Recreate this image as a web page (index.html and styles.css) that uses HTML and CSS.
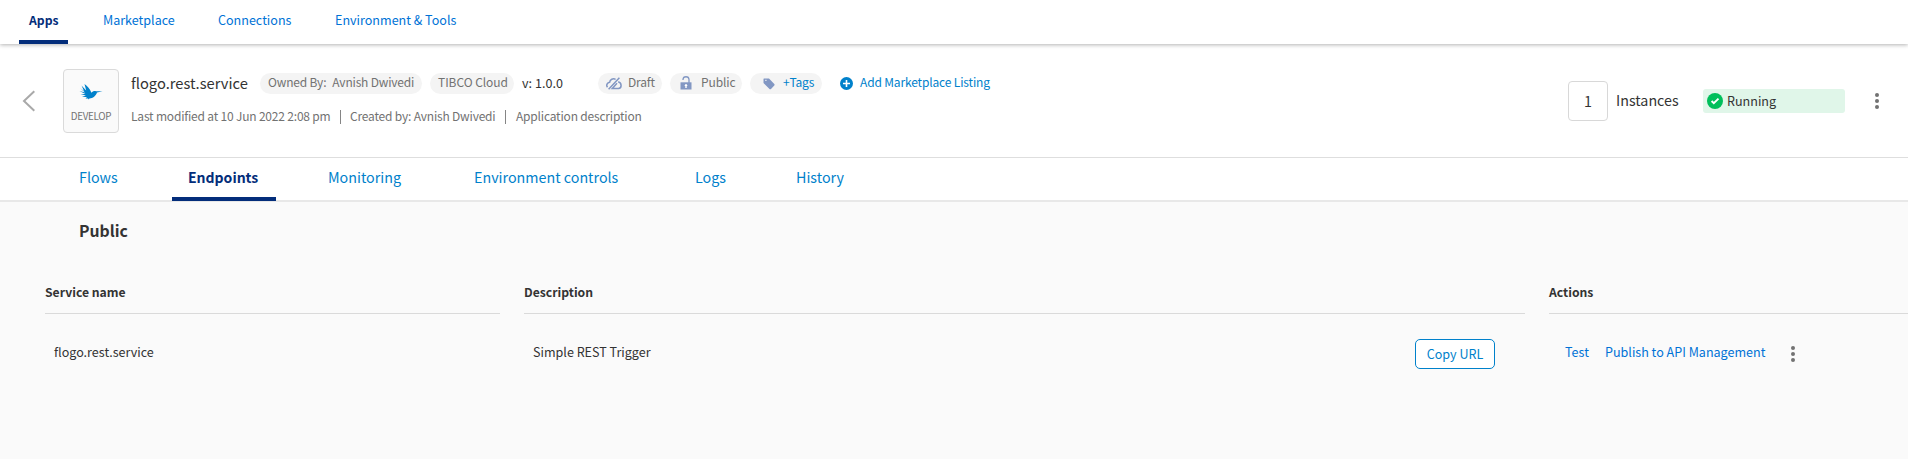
FILE: index.html
```html
<!DOCTYPE html>
<html lang="en">
<head>
<meta charset="utf-8">
<title>flogo.rest.service</title>
<link rel="stylesheet" href="styles.css">
</head>
<body>
<nav class="topnav">
  <a class="nav-item nav-apps">Apps</a>
  <a class="nav-item nav-market">Marketplace</a>
  <a class="nav-item nav-conn">Connections</a>
  <a class="nav-item nav-env">Environment &amp; Tools</a>
</nav>
<header class="app-header">
  <svg class="back" width="14" height="22" viewBox="0 0 14 22"><path d="M12.300 1.300 2 11l10.300 9.700" fill="none" stroke="#a9a9a9" stroke-width="2"/></svg>
  <div class="app-tile">
    <svg width="24" height="16" viewBox="0 0 24 16"><path fill="#0081cb" d="M1 4 5 7 2.500 1.500 7.200 6.500 5.500 0C8.500 2 11 5 12.400 8.800 13.500 7.500 15 6.900 17 7.200L23.500 7.300 18 8.600C17 12 13.800 14.500 10.500 14.600L9 15.500 9.200 14.500 6.500 14.500 8 13.200 3 12.500 7 11.500 1.500 10 6.500 10 .5 7 6 8.600Z"/></svg>
    <span class="tile-label">DEVELOP</span>
  </div>
  <div class="app-info">
    <div class="title-row">
      <h1 class="app-name">flogo.rest.service</h1>
      <span class="pill pill-owner"><span>Owned By:</span><span>Avnish Dwivedi</span></span>
      <span class="pill pill-cloud">TIBCO Cloud</span>
      <span class="version">v: 1.0.0</span>
      <span class="pill pill-draft"><svg width="16" height="13" viewBox="0 0 16 13"><path d="M2.600 12.300 13.400.7M1.500 10.300C-.2 8.200 1.300 5.600 3.600 5.300 4 2.500 7 1 9.600 2.300M12.200 4.800C16 6 16 11.200 12.500 11.400H6.300L11 6.300" fill="none" stroke="#8297c3" stroke-width="1.500"/></svg>Draft</span>
      <span class="pill pill-public"><svg width="12" height="14" viewBox="0 0 12 14"><path d="M3 4V3.500C3.200-.2 8.800-.2 9 3.500V7" fill="none" stroke="#8297c3" stroke-width="1.300"/><path fill="#8297c3" d="M.5 6.300h11v7.200H.5z"/><path fill="#fff" d="M5.300 8h1.400v1h.6v1h-.6v2H5.300v-2h-.6V9h.6z"/></svg>Public</span>
      <span class="pill pill-tags"><svg width="12" height="12" viewBox="0 0 12 12"><path fill="#8297c3" fill-rule="evenodd" d="M1 .5h5L11.300 6q.7.800 0 1.500L8 11q-.8.700-1.500 0L.5 5V1Q.5.500 1 .5Zm1.300 1.200v1.200h1.200V1.700Z"/></svg>+Tags</span>
      <a class="add-listing"><svg width="13" height="13" viewBox="0 0 13 13"><circle cx="6.500" cy="6.500" r="6.500" fill="#0081cb"/><path d="M6.500 3v7M3 6.500h7" stroke="#fff" stroke-width="1.600"/></svg><span>Add Marketplace Listing</span></a>
    </div>
    <div class="meta-row">
      <span class="modified">Last modified at 10 Jun 2022 2:08 pm</span><i class="bar"></i>
      <span class="created">Created by: Avnish Dwivedi</span><i class="bar"></i>
      <span class="desc">Application description</span>
    </div>
  </div>
  <div class="runtime">
    <span class="count">1</span>
    <span class="inst">Instances</span>
    <span class="status"><svg width="16" height="16" viewBox="0 0 16 16"><circle cx="8" cy="8" r="8" fill="#00bf5b"/><path d="m4.600 8 2.200 2.200L11.500 5.600" fill="none" stroke="#fff" stroke-width="1.900"/></svg><span>Running</span></span>
    <svg class="kebab" width="4" height="16" viewBox="0 0 4 16"><g fill="#727272"><circle cx="2" cy="2" r="2"/><circle cx="2" cy="8" r="2"/><circle cx="2" cy="14" r="2"/></g></svg>
  </div>
</header>
<nav class="tabs">
  <a class="tab tab-flows">Flows</a>
  <a class="tab tab-endpoints">Endpoints</a>
  <a class="tab tab-monitoring">Monitoring</a>
  <a class="tab tab-env">Environment controls</a>
  <a class="tab tab-logs">Logs</a>
  <a class="tab tab-history">History</a>
</nav>
<main class="content">
  <h2 class="section-title">Public</h2>
  <div class="grid head">
    <div class="th th-name">Service name</div>
    <div class="th th-desc">Description</div>
    <div class="th th-act">Actions</div>
  </div>
  <div class="grid row">
    <div class="cell"><span class="svc">flogo.rest.service</span></div>
    <div class="cell cell-desc"><span class="trigger">Simple REST Trigger</span><button class="copy">Copy URL</button></div>
    <div class="cell cell-act"><a class="test">Test</a><a class="publish">Publish to API Management</a>
      <svg class="kebab" width="4" height="16" viewBox="0 0 4 16"><g fill="#727272"><circle cx="2" cy="2" r="2"/><circle cx="2" cy="8" r="2"/><circle cx="2" cy="14" r="2"/></g></svg></div>
  </div>
</main>
</body>
</html>
```
FILE: styles.css
```css
* { box-sizing: border-box; }
body {
  margin: 0;
  height: 459px;
  overflow: hidden;
  background: #fafafa;
  color: #333;
  font: 12.550px/20px "Noto Sans CJK SC", "Open Sans", sans-serif;
  white-space: nowrap;
}
h1, h2 { margin: 0; font-weight: 400; }
svg { display: block; flex: none; }

.topnav {
  display: flex;
  height: 44px;
  padding-left: 19px;
  background: #fff;
  color: #0072d6;
  position: relative;
  box-shadow: 0 1px 4px rgba(0, 0, 0, .3);
}
.nav-item { padding-top: 10px; }
.nav-apps { width: 49px; padding-left: 10px; border-bottom: 4px solid #032d7a; color: #032d7a; font-weight: 700; font-size: 12.200px; }
.nav-market { width: 115px; margin-left: 35px; }
.nav-conn { width: 117px; }

.app-header {
  display: flex;
  height: 114px;
  background: #fff;
  border-bottom: 1px solid #dedede;
}
.back { margin: 46px 0 0 22px; }
.app-tile {
  display: flex;
  flex-direction: column;
  align-items: center;
  width: 56px;
  height: 64px;
  margin: 25px 0 0 27px;
  padding-top: 14px;
  border: 1px solid #dadada;
  border-radius: 4px;
  background: #fafafa;
}
.tile-label { margin-top: 7px; font-size: 9.800px; letter-spacing: -.28px; line-height: 18px; color: #727272; }
.app-info { margin: 29px 0 0 12px; color: #727272; }
.title-row { display: flex; height: 21px; }
.app-name { width: 129px; font-size: 14.700px; line-height: 20px; color: #333; }
.pill { display: flex; height: 21px; border-radius: 11px; background: #f4f4f4; line-height: 18px; padding-left: 8px; font-size: 12px; letter-spacing: -.18px; }
.pill-owner { width: 162px; gap: 6px; }
.pill-cloud { width: 84px; margin-left: 8px; letter-spacing: -.05px; }
.version { width: 84px; padding-left: 8px; color: #333; line-height: 20px; letter-spacing: .05px; }
.pill-draft { width: 64px; gap: 6px; }
.pill-draft svg { margin-top: 4px; }
.pill-public { width: 72px; margin-left: 8px; padding-left: 10px; gap: 9px; letter-spacing: -.1px; }
.pill-public svg { margin-top: 3px; }
.pill-tags { width: 72px; margin-left: 8px; padding-left: 13px; gap: 8px; color: #0081cb; }
.pill-tags svg { margin-top: 5px; }
.add-listing { display: flex; margin-left: 18px; gap: 7px; color: #0081cb; line-height: 18px; font-size: 12px; letter-spacing: -.15px; }
.add-listing svg { margin-top: 4px; }
.meta-row { display: flex; margin-top: 12px; font-size: 12px; letter-spacing: -.19px; }
.modified { width: 209px; }
.created { width: 155px; margin-left: 9px; }
.desc { margin-left: 10px; }
.bar { width: 1px; height: 14px; margin-top: 4px; background: #858585; }

.runtime { display: flex; margin-left: auto; padding-right: 29px; color: #333; }
.count { width: 40px; height: 40px; margin-top: 37px; border: 1px solid #d8d8d8; border-radius: 4px; text-align: center; font-size: 14.300px; line-height: 38px; }
.inst { width: 87px; margin: 46px 0 0 8px; font-size: 14.300px; line-height: 20px; }
.status { display: flex; align-items: center; gap: 4px; width: 142px; height: 24px; margin-top: 45px; padding-left: 4px; border-radius: 3px; background: #e0f6e9; }
.runtime .kebab { margin: 49px 0 0 30px; }

.tabs { display: flex; height: 44px; padding-left: 79px; background: #fff; border-bottom: 2px solid #e8e8e8; color: #0081cb; font-size: 14.300px; }
.tab { padding-top: 8px; line-height: 22px; }
.tab-flows { width: 93px; }
.tab-endpoints { width: 104px; height: 43px; padding-left: 16px; border-bottom: 4px solid #032d7a; color: #032d7a; font-weight: 700; font-size: 14px; }
.tab-monitoring { width: 145px; margin-left: 52px; }
.tab-env { width: 221px; margin-left: 1px; }
.tab-logs { width: 101px; }

.section-title { margin: 17px 0 0 79px; font-size: 15.800px; line-height: 24px; font-weight: 700; }
.grid { display: grid; grid-template-columns: 455px 1001px 359px; column-gap: 24px; margin-left: 45px; }
.head { margin-top: 38px; }
.th { height: 33px; border-bottom: 1px solid #dadada; line-height: 23px; font-weight: 700; font-size: 12.200px; }
.row { margin-top: 25px; }
.cell { display: flex; padding-left: 9px; line-height: 25px; }
.copy { width: 80px; height: 30px; margin-left: auto; margin-right: 30px; padding: 0; border: 1px solid #0081cb; border-radius: 5px; background: #fff; color: #0081cb; font: inherit; line-height: 28px; }
.cell-act { padding-left: 16px; color: #0072d6; }
.test { width: 40px; }
.publish { width: 186px; }
.cell-act .kebab { margin-top: 7px; }
```
